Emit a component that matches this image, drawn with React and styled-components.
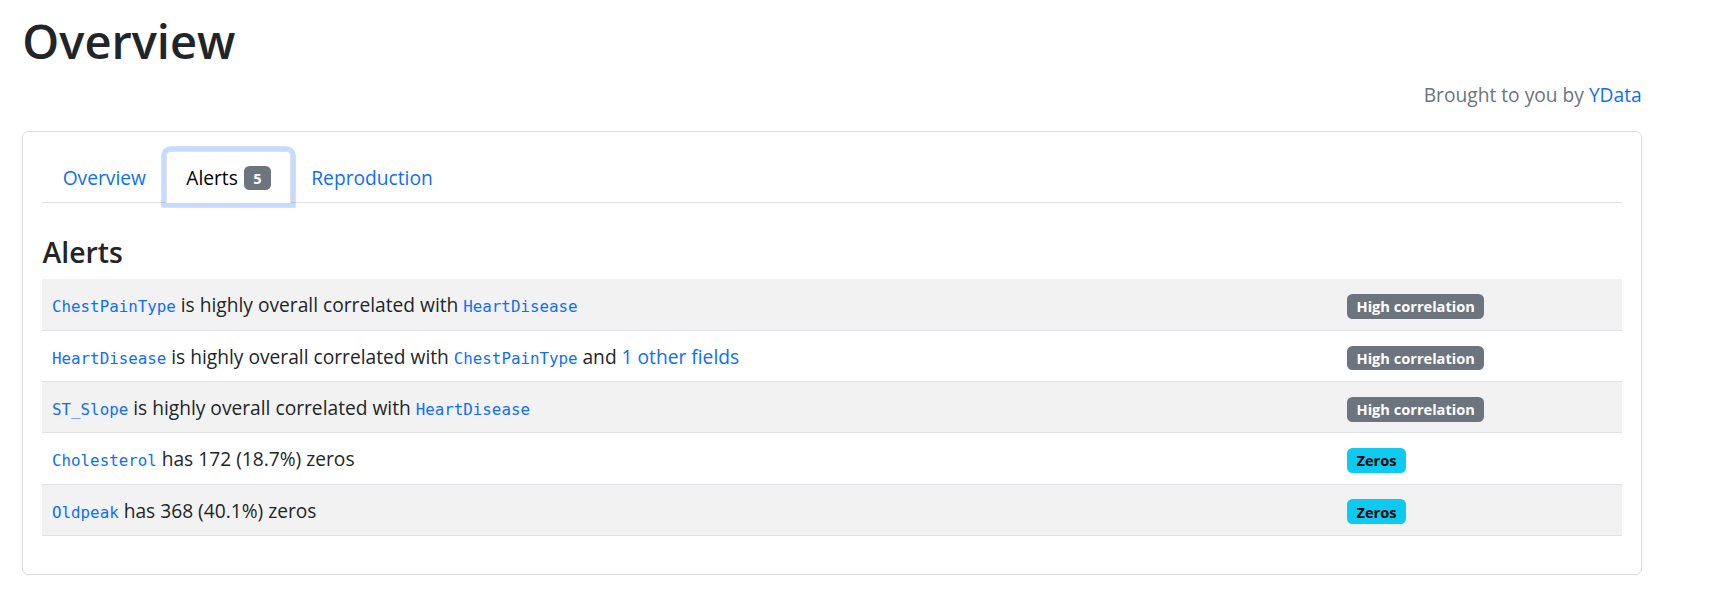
import React from "react";
import styled, { createGlobalStyle, css } from "styled-components";

const GlobalStyle = createGlobalStyle`
  html, body {
    margin: 0;
    padding: 0;
    background: #ffffff;
  }
  body {
    font-family: "Open Sans", "Noto Sans", "Liberation Sans", sans-serif;
    font-size: 19.2px;
    line-height: 28.8px;
    color: #212529;
  }
  * { box-sizing: border-box; }
`;

const Page = styled.div`
  padding: 12.6px 79.3px 0 22.3px;
`;

const Title = styled.h1`
  margin: 0 0 11px;
  font-size: 47px;
  line-height: 57.6px;
  font-weight: 600;
  color: #212529;
`;

const Credit = styled.p`
  margin: 0;
  text-align: right;
  color: #6c757d;
  font-size: 19.2px;
  line-height: 28.8px;
`;

const Link = styled.a`
  color: #0d6efd;
  text-decoration: none;
`;

const Card = styled.section`
  margin-top: 20.8px;
  border: 1px solid #dcdde0;
  border-radius: 6px;
  padding: 19.2px;
`;

const TabList = styled.ul`
  display: flex;
  margin: 0;
  padding: 0;
  list-style: none;
  border-bottom: 1px solid #dee2e6;
`;

const Tab = styled.li`
  display: flex;
  align-items: center;
  margin-bottom: -1px;
  padding: 11.6px 19.2px 9.6px;
  border: 1px solid transparent;
  border-radius: 4.5px 4.5px 0 0;
  color: #0d6efd;
  font-size: 19.2px;
  line-height: 28.8px;
  cursor: pointer;
  ${(p) =>
    p.$active &&
    css`
      color: #000000;
      background: #ffffff;
      border-color: #dee2e6 #dee2e6 #ffffff;
      box-shadow: 0 0 0 4.8px rgba(13, 110, 253, 0.25);
      position: relative;
      z-index: 1;
    `}
`;

const Badge = styled.span`
  display: inline-block;
  padding: 5.04px 9.36px;
  font-size: 14.6px;
  line-height: 1;
  font-weight: 700;
  white-space: nowrap;
  border-radius: 5.5px;
  color: ${(p) => (p.$tone === "info" ? "#000000" : "#ffffff")};
  background: ${(p) => (p.$tone === "info" ? "#0dcaf0" : "#6c757d")};
  margin-left: ${(p) => p.$gap || 0}px;
`;

const Pane = styled.div`
  padding-top: 31.9px;
`;

const SectionTitle = styled.h4`
  margin: 0 0 9.6px;
  font-size: 28.4px;
  line-height: 34.56px;
  font-weight: 600;
  color: #212529;
`;

const Table = styled.table`
  width: 100%;
  border-collapse: collapse;
  table-layout: fixed;
  margin-bottom: 19.2px;
`;

const Row = styled.tr`
  background: ${(p) => (p.$striped ? "#f2f2f2" : "#ffffff")};
  border-bottom: 1px solid #dee2e6;
`;

const Cell = styled.td`
  padding: 12px 9.6px 9.45px;
  height: 51.25px;
  line-height: 28.8px;
  font-size: 19.2px;
  color: #212529;
  vertical-align: top;
  width: ${(p) => (p.$w ? `${p.$w}px` : "auto")};
`;

const Code = styled.code`
  font-family: "DejaVu Sans Mono", "Liberation Mono", monospace;
  font-size: 15.8px;
  line-height: 1;
  color: #0d6efd;
`;

const alerts = [
  {
    parts: [
      ["code", "ChestPainType"],
      ["text", " is highly overall correlated with "],
      ["code", "HeartDisease"],
    ],
    badge: "High correlation",
    tone: "secondary",
  },
  {
    parts: [
      ["code", "HeartDisease"],
      ["text", " is highly overall correlated with "],
      ["code", "ChestPainType"],
      ["text", " and "],
      ["link", "1 other fields"],
    ],
    badge: "High correlation",
    tone: "secondary",
  },
  {
    parts: [
      ["code", "ST_Slope"],
      ["text", " is highly overall correlated with "],
      ["code", "HeartDisease"],
    ],
    badge: "High correlation",
    tone: "secondary",
  },
  {
    parts: [
      ["code", "Cholesterol"],
      ["text", " has 172 (18.7%) zeros"],
    ],
    badge: "Zeros",
    tone: "info",
  },
  {
    parts: [
      ["code", "Oldpeak"],
      ["text", " has 368 (40.1%) zeros"],
    ],
    badge: "Zeros",
    tone: "info",
  },
];

function renderPart([kind, value], i) {
  if (kind === "code")
    return (
      <Link key={i} href="#">
        <Code>{value}</Code>
      </Link>
    );
  if (kind === "link")
    return (
      <Link key={i} href="#">
        {value}
      </Link>
    );
  return <React.Fragment key={i}>{value}</React.Fragment>;
}

export default function App() {
  return (
    <>
      <GlobalStyle />
      <Page>
        <Title>Overview</Title>
        <Credit>
          Brought to you by <Link href="#">YData</Link>
        </Credit>
        <Card>
          <TabList>
            <Tab>Overview</Tab>
            <Tab $active>
              Alerts
              <Badge $gap={6}>5</Badge>
            </Tab>
            <Tab>Reproduction</Tab>
          </TabList>
          <Pane>
            <SectionTitle>Alerts</SectionTitle>
            <Table>
              <tbody>
                {alerts.map((a, i) => (
                  <Row key={i} $striped={i % 2 === 0}>
                    <Cell>{a.parts.map(renderPart)}</Cell>
                    <Cell $w={284}>
                      <Badge $tone={a.tone}>{a.badge}</Badge>
                    </Cell>
                  </Row>
                ))}
              </tbody>
            </Table>
          </Pane>
        </Card>
      </Page>
    </>
  );
}
